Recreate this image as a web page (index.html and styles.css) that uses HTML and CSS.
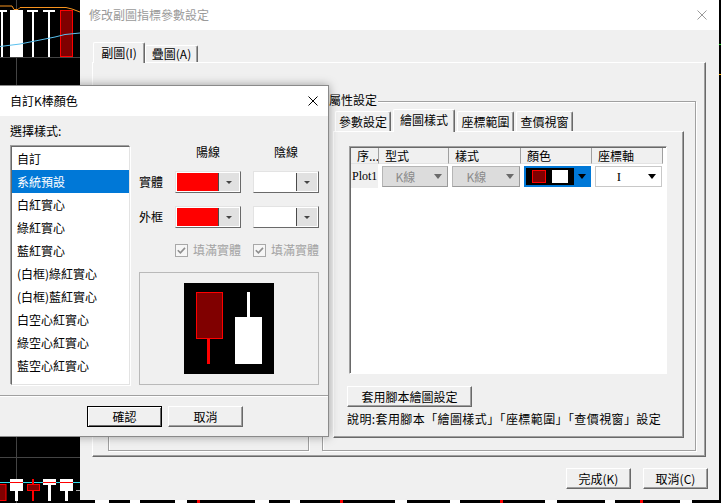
FILE: index.html
```html
<!DOCTYPE html>
<html lang="zh-Hant">
<head>
<meta charset="utf-8">
<title>修改副圖指標參數設定</title>
<link rel="stylesheet" href="styles.css">
</head>
<body>
<svg class="chart" width="721" height="503" viewBox="0 0 721 503">
  <rect width="721" height="503" fill="#000"/>
  <line x1="16.5" y1="0" x2="16.5" y2="503" stroke="#444"/>
  <line x1="0" y1="57.5" x2="80" y2="57.5" stroke="#444"/>
  <line x1="0" y1="457.5" x2="80" y2="457.5" stroke="#444"/>
  <rect x="0" y="10" width="7" height="2" fill="#fff"/>
  <rect x="1" y="10" width="2" height="47" fill="#fff"/>
  <rect x="10" y="10" width="13" height="47" fill="#fff"/>
  <rect x="27" y="10" width="11" height="2" fill="#fff"/>
  <rect x="32" y="10" width="2" height="47" fill="#fff"/>
  <rect x="43" y="10" width="12" height="2" fill="#fff"/>
  <rect x="48" y="10" width="2" height="47" fill="#fff"/>
  <rect x="60.5" y="10.5" width="12" height="46" fill="#800000" stroke="#f00"/>
  <polyline points="0,6 12,6 14,9.5 18,9.5 20,7.5 66,7.5 72,9 80,12" fill="none" stroke="#f7931e"/>
  <polyline points="0,46.5 20,44 40,40 55,37 65,34.5 80,33" fill="none" stroke="#5ac0ee"/>
  <line x1="0" y1="482.5" x2="80" y2="482.5" stroke="#33ddee"/>
  <rect x="-1" y="484.5" width="7" height="16" fill="#800000" stroke="#f00"/>
  <rect x="15" y="491" width="3" height="10" fill="#fff"/>
  <rect x="10" y="479" width="13" height="12" fill="#fff"/>
  <rect x="10" y="482" width="13" height="1" fill="#f00"/>
  <rect x="32" y="479" width="2" height="22" fill="#f00"/>
  <rect x="27.5" y="484.5" width="12" height="6" fill="#800000" stroke="#f00"/>
  <rect x="48" y="485" width="3" height="16" fill="#fff"/>
  <rect x="43" y="479" width="13" height="6" fill="#fff"/>
  <rect x="43" y="482" width="13" height="1" fill="#f00"/>
  <rect x="65" y="491" width="3" height="10" fill="#fff"/>
  <rect x="60" y="479" width="13" height="12" fill="#fff"/>
  <rect x="60" y="482" width="13" height="1" fill="#f00"/>
  <rect x="76" y="490" width="4" height="1" fill="#aaa"/>
  <rect x="95" y="500" width="14" height="3" fill="#fff"/>
  <rect x="130" y="500" width="10" height="3" fill="#fff"/>
  <rect x="175" y="500" width="12" height="3" fill="#fff"/>
  <rect x="197" y="500" width="3" height="3" fill="#f00"/>
  <rect x="255" y="500" width="14" height="3" fill="#fff"/>
  <rect x="290" y="500" width="10" height="3" fill="#fff"/>
  <rect x="340" y="500" width="3" height="3" fill="#f00"/>
  <rect x="395" y="500" width="12" height="3" fill="#fff"/>
  <rect x="450" y="500" width="10" height="3" fill="#fff"/>
  <rect x="500" y="500" width="3" height="3" fill="#f00"/>
  <rect x="545" y="500" width="12" height="3" fill="#fff"/>
  <rect x="605" y="500" width="10" height="3" fill="#fff"/>
  <rect x="640" y="500" width="3" height="3" fill="#f00"/>
  <rect x="680" y="500" width="12" height="3" fill="#fff"/>
  <rect x="719" y="44" width="2" height="1" fill="#2c2"/>
  <rect x="719" y="74" width="2" height="1" fill="#fa0"/>
</svg>

<section class="win main-win">
  <header class="titlebar">
    <span class="ttl">修改副圖指標參數設定</span>
    <svg class="close" width="10" height="10" viewBox="0 0 10 10"><path d="M0.5 0.5L9.5 9.5M9.5 0.5L0.5 9.5" stroke="currentColor" stroke-width="1" fill="none"/></svg>
  </header>
  <div class="main-body">
    <div class="tabstrip outer-strip">
      <div class="tab sel otab">副圖(I)</div>
      <div class="tab otab">疊圖(A)</div>
    </div>
    <div class="tabpanel outer">
      <div class="group left-group"></div>
      <div class="group prop-group">
        <span class="group-label">屬性設定</span>
        <div class="tabstrip inner-strip">
          <div class="tab itab w56">參數設定</div>
          <div class="tab itab sel w62">繪圖樣式</div>
          <div class="tab itab w57">座標範圍</div>
          <div class="tab itab w57">查價視窗</div>
        </div>
        <div class="tabpanel inner">
          <div class="grid">
            <div class="grow ghead">
              <div class="hc">序...</div>
              <div class="hc">型式</div>
              <div class="hc">樣式</div>
              <div class="hc">顏色</div>
              <div class="hc">座標軸</div>
            </div>
            <div class="grow gbody">
              <div class="rc name">Plot1</div>
              <div class="rc"><div class="combo dis"><span class="cv">K線</span><span class="cd"><i class="tri gray"></i></span></div></div>
              <div class="rc"><div class="combo dis"><span class="cv">K線</span><span class="cd"><i class="tri gray"></i></span></div></div>
              <div class="rc"><div class="ccombo"><span class="field"><i class="sq red"></i><i class="sq white"></i></span><span class="cd"><i class="tri"></i></span></div></div>
              <div class="rc"><div class="combo axis"><span class="cv serif">I</span><span class="cd"><i class="tri"></i></span></div></div>
            </div>
          </div>
          <button class="btn apply">套用腳本繪圖設定</button>
          <p class="note">說明:套用腳本「繪圖樣式」「座標範圍」「查價視窗」設定</p>
        </div>
      </div>
    </div>
    <div class="footer">
      <button class="btn fbtn">完成(K)</button>
      <button class="btn fbtn">取消(C)</button>
    </div>
  </div>
</section>

<section class="win color-win">
  <header class="titlebar">
    <span class="ttl">自訂K棒顏色</span>
    <svg class="close" width="10" height="10" viewBox="0 0 10 10"><path d="M0.5 0.5L9.5 9.5M9.5 0.5L0.5 9.5" stroke="currentColor" stroke-width="1" fill="none"/></svg>
  </header>
  <div class="cbody">
    <div class="ctop">
      <p class="lbl">選擇樣式:</p>
      <div class="cmain">
        <ul class="listbox">
          <li>自訂</li>
          <li class="on">系統預設</li>
          <li>白紅實心</li>
          <li>綠紅實心</li>
          <li>藍紅實心</li>
          <li>(白框)綠紅實心</li>
          <li>(白框)藍紅實心</li>
          <li>白空心紅實心</li>
          <li>綠空心紅實心</li>
          <li>藍空心紅實心</li>
        </ul>
        <div class="rp">
          <div class="prow hdr">
            <span></span>
            <span class="hl">陽線</span>
            <span class="hl">陰線</span>
          </div>
          <div class="prow r1">
            <span>實體</span>
            <span class="swcombo"><span class="sw red"></span><span class="dd"><i class="mtri"></i></span></span>
            <span class="swcombo"><span class="sw white"></span><span class="dd"><i class="mtri"></i></span></span>
          </div>
          <div class="prow r2">
            <span>外框</span>
            <span class="swcombo"><span class="sw red"></span><span class="dd"><i class="mtri"></i></span></span>
            <span class="swcombo"><span class="sw white"></span><span class="dd"><i class="mtri"></i></span></span>
          </div>
          <div class="prow chk">
            <span></span>
            <span class="chkl"><svg class="cb" width="13" height="13" viewBox="0 0 13 13"><rect x="0.5" y="0.5" width="12" height="12" fill="#f6f6f6" stroke="#a8a8a8"/><path d="M2.8 6.3l2.6 2.6 4.6-5" fill="none" stroke="#8e8e8e" stroke-width="1.6"/></svg><span>填滿實體</span></span>
            <span class="chkl"><svg class="cb" width="13" height="13" viewBox="0 0 13 13"><rect x="0.5" y="0.5" width="12" height="12" fill="#f6f6f6" stroke="#a8a8a8"/><path d="M2.8 6.3l2.6 2.6 4.6-5" fill="none" stroke="#8e8e8e" stroke-width="1.6"/></svg><span>填滿實體</span></span>
          </div>
          <div class="preview">
            <svg width="90" height="91" viewBox="0 0 90 91">
              <rect width="90" height="91" fill="#000"/>
              <rect x="23" y="56" width="3" height="25" fill="#f00"/>
              <rect x="12.5" y="9.5" width="26" height="46" fill="#800000" stroke="#f00"/>
              <rect x="63" y="9" width="3" height="25" fill="#fff"/>
              <rect x="51" y="34" width="27" height="47" fill="#fff"/>
            </svg>
          </div>
        </div>
      </div>
    </div>
    <div class="sep"></div>
    <div class="cbtns">
      <button class="btn dlg default">確認</button>
      <button class="btn dlg">取消</button>
    </div>
  </div>
</section>
</body>
</html>
```

FILE: styles.css
```css
* { box-sizing: border-box; }
html, body { margin: 0; padding: 0; }
body {
  width: 721px;
  height: 503px;
  overflow: hidden;
  position: relative;
  background: #000;
  font-family: "Noto Sans CJK TC", "Noto Sans", sans-serif;
  font-size: 12px;
  line-height: 16px;
  color: #000;
}
p, ul { margin: 0; padding: 0; }
button { font: inherit; color: #000; padding: 0; }

.chart { position: absolute; left: 0; top: 0; }

.win {
  position: absolute;
  background: #f0f0f0;
  display: flex;
  flex-direction: column;
}
.main-win { left: 80px; top: 0; width: 639px; height: 500px; }
.color-win {
  left: -1px; top: 85px; width: 330px; height: 352px;
  border: 1px solid #8a8a8a;
  box-shadow: 0 0 9px rgba(0, 0, 0, 0.35);
}

.titlebar {
  flex: none;
  height: 30px;
  background: #fff;
  display: flex;
  align-items: center;
  justify-content: space-between;
}
.main-win .titlebar { padding: 0 12px 0 9px; color: #9a9a9a; }
.color-win .titlebar { padding: 0 10px 0 10px; color: #000; }
.close { display: block; }

/* ---------- main dialog ---------- */
.main-body {
  flex: 1;
  display: flex;
  flex-direction: column;
  padding: 12px 0 0 12px;
}
.tabstrip { display: flex; align-items: flex-end; }
.outer-strip { height: 20px; padding-left: 1px; }
.tab {
  background: #f0f0f0;
  border: 1px solid #fff;
  border-bottom: none;
  border-right-color: #696969;
  box-shadow: inset -1px 0 0 #a0a0a0;
  border-radius: 2px 2px 0 0;
  display: flex;
  align-items: center;
  justify-content: center;
  white-space: nowrap;
}
.otab { width: 53px; height: 17px; }
.otab.sel { width: 52px; }
.tab.sel { margin-bottom: -1px; position: relative; z-index: 1; }
.outer-strip .tab.sel { height: 21px; padding-bottom: 1px; }

.tabpanel {
  border: 1px solid;
  border-color: #fff #696969 #696969 #fff;
  box-shadow: inset -1px -1px 0 #a0a0a0;
}
.tabpanel.outer {
  width: 614px;
  height: 395px;
  display: flex;
  align-items: flex-start;
  gap: 13px;
  padding: 38px 0 0 15px;
}
.group {
  position: relative;
  height: 350px;
  border: 1px solid #a0a0a0;
  box-shadow: inset 1px 1px 0 #fff, 1px 1px 0 #fff;
}
.left-group { width: 201px; }
.prop-group {
  width: 374px;
  display: flex;
  flex-direction: column;
  padding: 7px 0 0 10px;
}
.group-label {
  position: absolute;
  left: 5px;
  top: -10px;
  padding: 0 1px;
  background: #f0f0f0;
}
.inner-strip { height: 22px; padding-left: 2px; gap: 2px; }
.itab { height: 20px; }
.itab.sel { height: 23px; padding-bottom: 2px; }
.w56 { width: 56px; }
.w57 { width: 57px; }
.w62 { width: 62px; }

.tabpanel.inner {
  width: 351px;
  height: 307px;
  padding: 14px 0 0 15px;
  display: flex;
  flex-direction: column;
  align-items: flex-start;
}
.grid {
  width: 318px;
  height: 228px;
  background: #fff;
  border: 1px solid;
  border-color: #a0a0a0 #fff #fff #a0a0a0;
  box-shadow: inset 1px 1px 0 #696969;
  padding: 1px 0 0 1px;
}
.grow { display: grid; grid-template-columns: 28px 70px 72px 71px 71px; }
.ghead { height: 16px; }
.hc {
  background: #f0f0f0;
  border-right: 1px solid #a0a0a0;
  border-bottom: 1px solid #e3e3e3;
  padding-left: 6px;
  line-height: 15px;
  white-space: nowrap;
  overflow: hidden;
}
.gbody { height: 24px; }
.rc { padding: 2px 1px 1px 3px; }
.rc.name {
  background: #f0f0f0;
  padding: 0 0 0 1px;
  line-height: 24px;
  font-family: "Liberation Serif", serif;
  font-size: 12px;
  margin-right: 1px;
}
.combo {
  height: 21px;
  display: flex;
  align-items: stretch;
  border: 1px solid #adadad;
}
.combo.dis { background: #dcdcdc; color: #8a8a8a; border-color: #b5b5b5 #9a9a9a #9a9a9a #b5b5b5; }
.combo.axis { background: #fff; border-color: #c8c8c8; }
.cv { flex: 1; display: flex; align-items: center; justify-content: center; }
.serif { font-family: "Liberation Serif", serif; font-size: 13px; }
.cd { width: 19px; display: flex; align-items: center; justify-content: center; }
.tri {
  display: block;
  width: 0; height: 0;
  border-left: 4.5px solid transparent;
  border-right: 4.5px solid transparent;
  border-top: 5px solid #000;
}
.tri.gray { border-top-color: #6a6a6a; }
.ccombo {
  height: 21px;
  display: flex;
  border: 2px solid #0078d7;
  background: #0078d7;
}
.field {
  width: 48px;
  background: #000;
  display: flex;
  align-items: center;
  padding-left: 6px;
  gap: 6px;
}
.sq { display: block; height: 13px; }
.sq.red { width: 14px; background: #800000; border: 1px solid #f00; }
.sq.white { width: 16px; background: #fff; }
.ccombo .cd { flex: 1; width: auto; }

.btn {
  height: 21px;
  background: #f0f0f0;
  border: 1px solid;
  border-color: #fff #696969 #696969 #fff;
  box-shadow: inset -1px -1px 0 #a0a0a0;
  display: flex;
  align-items: center;
  justify-content: center;
  line-height: 16px;
}
.apply { width: 125px; margin: 12px 0 0 -2px; }
.note { margin: 3px 0 0 -2px; line-height: 17px; white-space: nowrap; letter-spacing: 0.4px; }

.footer {
  display: flex;
  justify-content: flex-end;
  gap: 12px;
  padding-right: 11px;
  margin-top: 11px;
}
.fbtn { width: 65px; }

/* ---------- color dialog ---------- */
.cbody { flex: 1; display: flex; flex-direction: column; }
.ctop { padding: 7px 0 0 11px; }
.lbl { margin: 0 0 7px -1px; height: 16px; }
.cmain { display: flex; gap: 9px; align-items: flex-start; }
.listbox {
  list-style: none;
  width: 119px;
  height: 239px;
  background: #fff;
  border: 1px solid;
  border-color: #696969 #e3e3e3 #e3e3e3 #696969;
  box-shadow: -1px -1px 0 #a0a0a0, 1px 1px 0 #fff;
  overflow: hidden;
}
.listbox li {
  height: 23px;
  line-height: 23px;
  padding-left: 5px;
  white-space: nowrap;
}
.listbox li.on { background: #0078d7; color: #fff; }

.rp { display: flex; flex-direction: column; margin-top: -2px; }
.prow {
  display: grid;
  grid-template-columns: 36px 78px 66px;
  align-items: center;
}
.hdr { height: 16px; }
.hl { width: 66px; text-align: center; }
.r1 { height: 22px; margin-top: 11px; }
.r2 { height: 22px; margin-top: 13px; }
.chk { height: 16px; margin-top: 14px; }
.swcombo {
  width: 66px;
  height: 22px;
  display: flex;
  padding: 1px;
  border: 1px solid;
  border-color: #e3e3e3 #696969 #696969 #e3e3e3;
  background: #fff;
}
.sw { flex: 1; }
.sw.red { background: #f00; }
.sw.white { background: #fff; }
.dd {
  width: 21px;
  border-left: 1px solid #4a4a4a;
  background: #e1e1e1;
  display: flex;
  align-items: center;
  justify-content: center;
}
.mtri {
  display: block;
  width: 0; height: 0;
  border-left: 3px solid transparent;
  border-right: 3px solid transparent;
  border-top: 3px solid #444;
}
.chkl { display: flex; align-items: center; gap: 5px; color: #a3a3a3; white-space: nowrap; }
.cb { display: block; flex: none; }
.preview {
  margin-top: 14px;
  width: 180px;
  height: 113px;
  border: 1px solid #b9b9b9;
  display: flex;
  align-items: center;
  justify-content: center;
}
.preview svg { display: block; }

.sep {
  margin-top: 10px;
  height: 2px;
  border-top: 1px solid #a0a0a0;
  border-bottom: 1px solid #fff;
}
.cbtns {
  display: flex;
  justify-content: center;
  gap: 6px;
  margin-top: 9px;
  padding-left: 2px;
}
.dlg { width: 75px; }
.dlg.default {
  border-color: #000;
  box-shadow: inset 1px 1px 0 #fff, inset -1px -1px 0 #696969;
}
```
